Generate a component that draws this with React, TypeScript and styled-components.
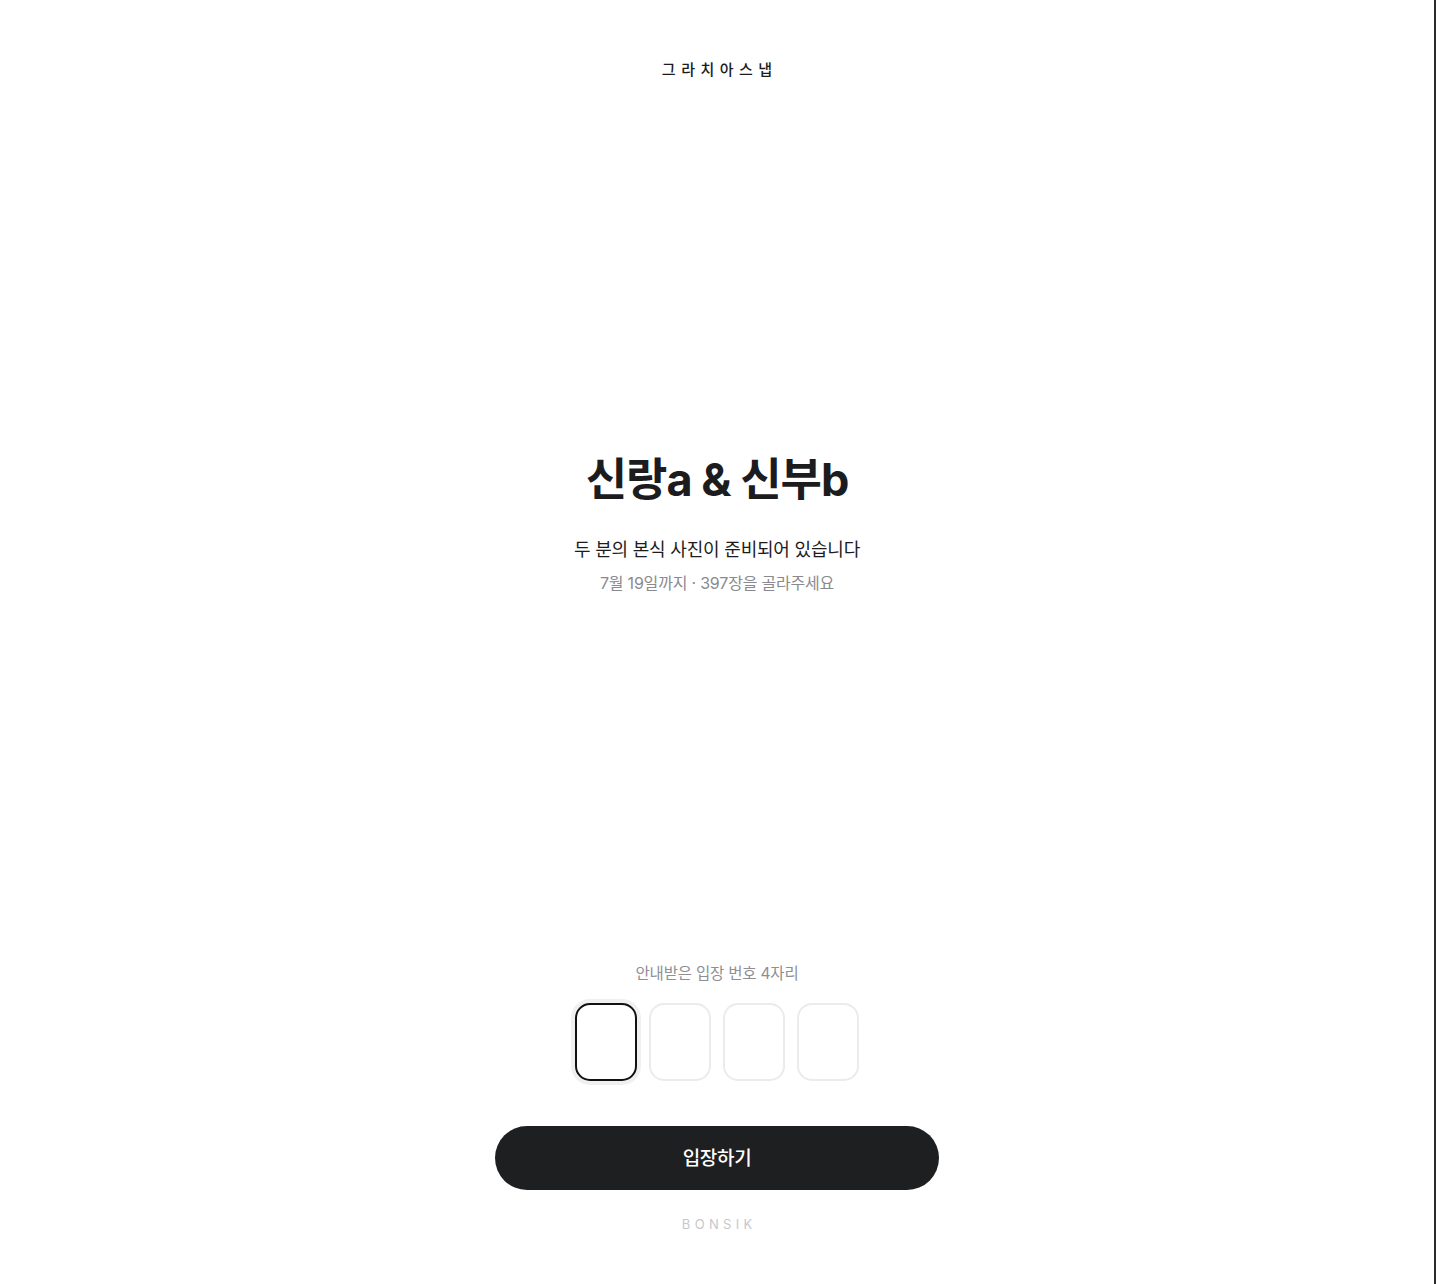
import React from 'react';
import styled, { createGlobalStyle } from 'styled-components';

const GlobalStyle = createGlobalStyle`
  html, body {
    margin: 0;
    padding: 0;
    background: #ffffff;
  }
  body {
    font-family: Inter, "Noto Sans CJK KR", "Noto Sans", sans-serif;
    color: #1c1c1e;
    -webkit-font-smoothing: antialiased;
  }
  * {
    box-sizing: border-box;
  }
`;

const Page = styled.div`
  width: 1436px;
  height: 1284px;
  border-right: 2px solid #2a2a2a;
  display: flex;
  flex-direction: column;
  align-items: center;
`;

const Brand = styled.header`
  margin-top: 59px;
  font-size: 15px;
  font-weight: 500;
  letter-spacing: 5.5px;
  color: #1c1c1e;
  line-height: 22px;
  padding-left: 5.5px;
`;

const Hero = styled.main`
  flex: 1;
  display: flex;
  flex-direction: column;
  align-items: center;
  justify-content: center;
  padding-top: 2px;
`;

const Title = styled.h1`
  margin: 0;
  font-size: 45px;
  font-weight: 700;
  letter-spacing: -1px;
  line-height: 56px;
  color: #1c1c1e;
`;

const Lead = styled.p`
  margin: 29px 0 0;
  font-size: 18px;
  line-height: 26px;
  color: #1c1c1e;
  letter-spacing: -0.2px;
`;

const Note = styled.p`
  margin: 9px 0 0;
  font-size: 16px;
  line-height: 22px;
  color: #8a8a8e;
  letter-spacing: -0.2px;
`;

const Bottom = styled.section`
  width: 444px;
  display: flex;
  flex-direction: column;
  align-items: center;
  padding-bottom: 51px;
`;

const Label = styled.div`
  font-size: 15.5px;
  line-height: 22px;
  color: #8e8e93;
  letter-spacing: -0.2px;
`;

const Digits = styled.div`
  margin-top: 18px;
  display: flex;
  gap: 12px;
`;

const Digit = styled.input<{ $active?: boolean }>`
  width: 62px;
  height: 78px;
  border-radius: 15px;
  background: #ffffff;
  outline: none;
  text-align: center;
  font-size: 28px;
  font-family: inherit;
  border: ${({ $active }) => ($active ? '2px solid #111111' : '2px solid #ebebed')};
  box-shadow: ${({ $active }) => ($active ? '0 0 0 4px #f0f0f1' : 'none')};
`;

const Enter = styled.button`
  margin-top: 45px;
  width: 444px;
  height: 64px;
  padding: 0 0 3px;
  border: none;
  border-radius: 32px;
  background: #1e1f21;
  color: #ffffff;
  font-family: inherit;
  font-size: 19px;
  font-weight: 500;
  letter-spacing: -0.3px;
  cursor: pointer;
`;

const Footer = styled.div`
  margin-top: 25px;
  font-size: 13px;
  line-height: 18px;
  letter-spacing: 4.3px;
  color: #c7c7cc;
  padding-left: 4.3px;
`;

export default function App() {
  return (
    <>
      <GlobalStyle />
      <Page>
        <Brand>그라치아스냅</Brand>
        <Hero>
          <Title>신랑a &amp; 신부b</Title>
          <Lead>두 분의 본식 사진이 준비되어 있습니다</Lead>
          <Note>7월 19일까지 · 397장을 골라주세요</Note>
        </Hero>
        <Bottom>
          <Label>안내받은 입장 번호 4자리</Label>
          <Digits>
            {[0, 1, 2, 3].map((i) => (
              <Digit key={i} $active={i === 0} maxLength={1} inputMode="numeric" />
            ))}
          </Digits>
          <Enter>입장하기</Enter>
          <Footer>BONSIK</Footer>
        </Bottom>
      </Page>
    </>
  );
}
